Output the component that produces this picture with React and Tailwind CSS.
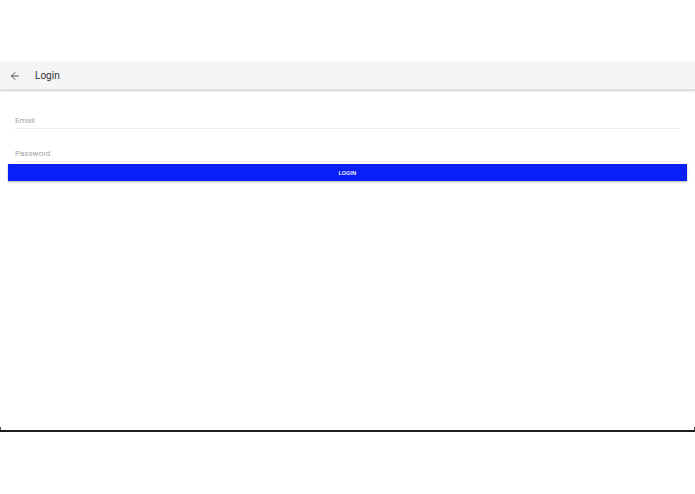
import { ArrowLeft } from "lucide-react";

const App = () => {
  return (
    <div className="w-[695px] h-[494px] bg-white font-['Roboto',sans-serif]">
      <div className="h-[62px]" />
      <div className="h-[370px] flex flex-col border-b-2 border-[#1c1f1e] relative">
        <header className="h-[28px] flex items-center bg-[#f5f5f5] shadow-[0_1px_2px_rgba(0,0,0,0.2)] border-b border-[#dedede]">
          <ArrowLeft className="ml-[9px] h-[12px] w-[12px] text-[#444]" strokeWidth={1.8} />
          <h1 className="ml-[14px] text-[10px] font-normal text-[#333]">Login</h1>
        </header>
        <main className="flex flex-col pt-[26px]">
          <div className="mx-[15px] h-[13px] border-b border-[#ececec] flex items-start">
            <span className="text-[8px] leading-[10px] text-[#a3a3a3]">Email</span>
          </div>
          <div className="mx-[15px] mt-[20px] h-[13px] border-b border-[#ececec] flex items-start">
            <span className="text-[8px] leading-[10px] text-[#a3a3a3]">Password</span>
          </div>
          <button className="mx-[8px] mt-[2px] h-[17px] bg-[#0a1ef8] text-white text-[6px] font-medium tracking-wide shadow-[0_1px_2px_rgba(0,0,0,0.3)] flex items-center justify-center">
            LOGIN
          </button>
        </main>
        <div className="absolute left-0 bottom-0 w-px h-[3px] bg-[#555]" />
        <div className="absolute right-0 bottom-0 w-px h-[3px] bg-[#555]" />
      </div>
    </div>
  );
};

export default App;
